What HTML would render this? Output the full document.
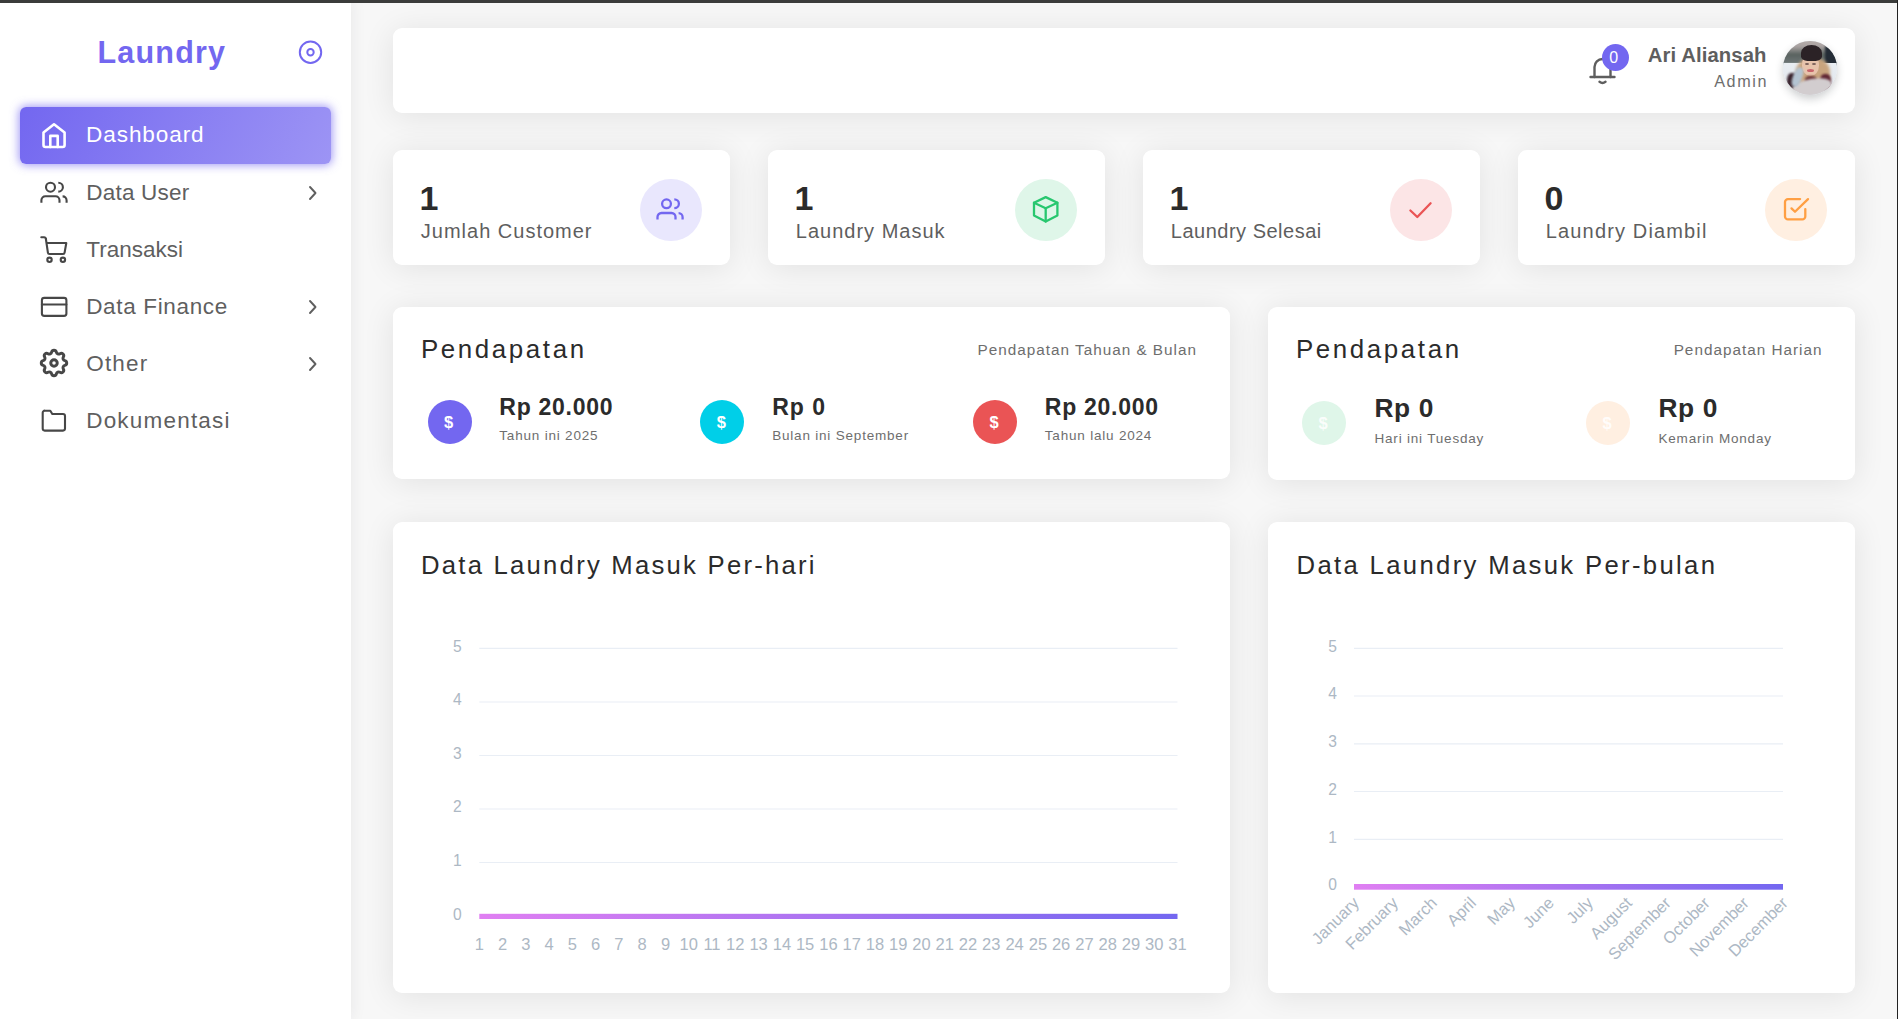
<!DOCTYPE html><html><head><meta charset="utf-8"><style>
*{margin:0;padding:0;box-sizing:border-box}
html,body{width:1898px;height:1019px;overflow:hidden;background:#f7f7f7;font-family:"Liberation Sans",sans-serif}
.abs{position:absolute}
.t{position:absolute;line-height:1;white-space:nowrap}
.card{position:absolute;background:#fff;border-radius:9px;box-shadow:0 3px 32px 0 rgba(0,0,0,.09)}
svg{position:absolute;overflow:visible}
</style></head><body>
<div class="abs" style="left:0;top:0;width:1898px;height:3px;background:#3b3c3b;z-index:50"></div>
<div class="abs" style="left:1897px;top:0;width:1px;height:1019px;background:#222;z-index:50"></div>
<div class="abs" style="left:0;top:0;width:351px;height:1019px;background:#fff;box-shadow:0 0 15px 0 rgba(34,41,47,.08);z-index:5"></div>
<div class="abs" style="left:0;top:0;width:351px;height:1019px;z-index:6">
<div class="t" style="left:97.50px;top:37.00px;font-size:30.5px;letter-spacing:1.2px;color:#7367f0;font-weight:700;">Laundry</div>
<svg style="left:0;top:0" width="351" height="100"><circle cx="310.5" cy="52.2" r="10.7" fill="none" stroke="#7367f0" stroke-width="2.0"/><circle cx="310.5" cy="52.2" r="3.2" fill="none" stroke="#7367f0" stroke-width="2"/></svg>
<div class="abs" style="left:20px;top:107px;width:311px;height:56.6px;border-radius:6px;background:linear-gradient(118deg,#7367f0,rgba(115,103,240,.7));box-shadow:0 0 10px 1px rgba(115,103,240,.7)"></div>
<svg style="left:36px;top:118px" width="36" height="36" fill="none" stroke="#fff" stroke-width="2.6" stroke-linejoin="round" stroke-linecap="round"><path d="M7.5 14.5 L18 6.3 L28.6 14.5 V27 a2 2 0 0 1 -2 2 H9.5 a2 2 0 0 1 -2 -2 Z"/><path d="M14.3 29 V17.9 H21.7 V29"/></svg>
<div class="t" style="left:86.10px;top:123.88px;font-size:22.6px;letter-spacing:0.88px;color:#fff;">Dashboard</div>
<div class="t" style="left:86.20px;top:181.56px;font-size:22.5px;letter-spacing:0.23px;color:#5f5f5f;">Data User</div>
<div class="t" style="left:86.20px;top:238.57px;font-size:22.5px;letter-spacing:0.03px;color:#5f5f5f;">Transaksi</div>
<div class="t" style="left:86.20px;top:295.56px;font-size:22.5px;letter-spacing:0.66px;color:#5f5f5f;">Data Finance</div>
<div class="t" style="left:86.20px;top:352.56px;font-size:22.5px;letter-spacing:1.2px;color:#5f5f5f;">Other</div>
<div class="t" style="left:86.20px;top:409.56px;font-size:22.5px;letter-spacing:1.2px;color:#5f5f5f;">Dokumentasi</div>
<svg style="left:36px;top:176px" width="36" height="36" fill="none" stroke="#474747" stroke-width="2.1" stroke-linecap="butt" stroke-linejoin="round"><circle cx="14.5" cy="11.2" r="4.5"/><path d="M22.3 6.8 A4.6 4.4 0 0 1 22.3 15.6"/><path d="M5.4 26.7 V24.2 A4 4 0 0 1 9.4 20.2 H19.5 A4 4 0 0 1 23.5 24.2 V26.7"/><path d="M26.6 20.4 A4 4 0 0 1 30.6 24.4 V26.7"/></svg>
<svg style="left:36px;top:232px" width="36" height="36" fill="none" stroke="#474747" stroke-width="2.1" stroke-linecap="round" stroke-linejoin="round"><path d="M5.3 5.3 H8 A1.9 1.9 0 0 1 9.9 7 L11.9 20.6 A1.6 1.6 0 0 0 13.5 22 H27 A1.6 1.6 0 0 0 28.6 20.6 L30.3 11 H10.7"/><circle cx="13.5" cy="27.8" r="2.2"/><circle cx="26.9" cy="27.8" r="2.2"/></svg>
<svg style="left:36px;top:290px" width="36" height="36" fill="none" stroke="#474747" stroke-width="2.1" stroke-linecap="round" stroke-linejoin="round"><rect x="5.9" y="7.9" width="24.5" height="18" rx="2.4"/><path d="M5.9 14.5 H30.4"/></svg>
<svg style="left:39.3px;top:348.3px" width="30" height="30" viewBox="0 0 24 24" fill="none" stroke="#474747" stroke-width="2.1" stroke-linecap="round" stroke-linejoin="round"><g transform="translate(12 12) scale(1.13) translate(-12 -12)"><path d="M10.325 4.317c.426 -1.756 2.924 -1.756 3.35 0a1.724 1.724 0 0 0 2.573 1.066c1.543 -.94 3.31 .826 2.37 2.37a1.724 1.724 0 0 0 1.065 2.572c1.756 .426 1.756 2.924 0 3.35a1.724 1.724 0 0 0 -1.066 2.573c.94 1.543 -.826 3.31 -2.37 2.370a1.724 1.724 0 0 0 -2.572 1.065c-.426 1.756 -2.924 1.756 -3.35 0a1.724 1.724 0 0 0 -2.573 -1.066c-1.543 .94 -3.31 -.826 -2.37 -2.37a1.724 1.724 0 0 0 -1.065 -2.572c-1.756 -.426 -1.756 -2.924 0 -3.35a1.724 1.724 0 0 0 1.066 -2.573c-.94 -1.543 .826 -3.31 2.37 -2.37c1 .608 2.296 .07 2.572 -1.065z"/><circle cx="12" cy="12" r="2.3"/></g></svg>
<svg style="left:36px;top:403px" width="36" height="36" fill="none" stroke="#474747" stroke-width="2.1" stroke-linecap="round" stroke-linejoin="round"><path d="M9 7.7 H14.3 L16.3 11 H27 A2 2 0 0 1 29 13 V25.6 A2 2 0 0 1 27 27.6 H8.7 A2 2 0 0 1 6.7 25.6 V9.7 A2 2 0 0 1 9 7.7 Z"/></svg>
<svg style="left:300px;top:180.8px" width="24" height="24" fill="none" stroke="#5f5f5f" stroke-width="1.9" stroke-linecap="round" stroke-linejoin="round"><path d="M10 6 L15.5 12 L10 18"/></svg>
<svg style="left:300px;top:294.8px" width="24" height="24" fill="none" stroke="#5f5f5f" stroke-width="1.9" stroke-linecap="round" stroke-linejoin="round"><path d="M10 6 L15.5 12 L10 18"/></svg>
<svg style="left:300px;top:351.8px" width="24" height="24" fill="none" stroke="#5f5f5f" stroke-width="1.9" stroke-linecap="round" stroke-linejoin="round"><path d="M10 6 L15.5 12 L10 18"/></svg>
</div>
<div class="card" style="left:393px;top:28px;width:1462px;height:85px"></div>
<svg style="left:1580px;top:40px" width="50" height="50" fill="none" stroke="#5e5e5e" stroke-width="2.4" stroke-linecap="round" stroke-linejoin="round"><path d="M14.5 37 V27 A8 8 0 0 1 30.5 27 V37"/><path d="M10.5 37 H34.5"/><path d="M19.5 41.8 Q22.5 44 25.5 41.8"/></svg>
<div class="abs" style="left:1601.5px;top:43.5px;width:27px;height:27px;border-radius:50%;background:#7367f0"></div>
<div class="t" style="left:1609.30px;top:49.96px;font-size:16px;letter-spacing:0px;color:#fff;">0</div>
<div class="t" style="right:131.40px;top:45.03px;font-size:20.3px;letter-spacing:0.1px;color:#5e5e5e;font-weight:700;">Ari Aliansah</div>
<div class="t" style="right:129.90px;top:73.09px;font-size:16.2px;letter-spacing:1.6px;color:#6e6e6e;">Admin</div>
<div class="abs" style="left:1783px;top:41px;width:54px;height:54px;border-radius:50%;box-shadow:0 4px 8px 0 rgba(34,41,47,.22)"></div>
<div class="abs" style="left:1783px;top:41px;width:54px;height:54px;border-radius:50%;overflow:hidden;background:#e4e9ef">
<div class="abs" style="left:-4px;top:-4px;width:62px;height:27px;background:linear-gradient(180deg,#bdb3b0 0%,#a9a2a1 35%,#59625f 65%,#6f7778 100%);filter:blur(1px)"></div>
<div class="abs" style="left:42px;top:5px;width:16px;height:19px;background:#242c36;filter:blur(0.8px)"></div>
<div class="abs" style="left:-4px;top:22px;width:62px;height:36px;background:linear-gradient(180deg,#e9edf2,#dde3ea)"></div>
<div class="abs" style="left:13px;top:17px;width:34px;height:30px;border-radius:45% 45% 35% 35%;background:#c9a47e;filter:blur(1.4px)"></div>
<div class="abs" style="left:19px;top:14px;width:17px;height:21px;border-radius:45% 45% 50% 50%;background:#e8c3ab;filter:blur(0.6px)"></div>
<div class="abs" style="left:22px;top:21.5px;width:4px;height:2px;border-radius:50%;background:#7a6058;filter:blur(0.4px)"></div>
<div class="abs" style="left:29px;top:21.5px;width:4px;height:2px;border-radius:50%;background:#7a6058;filter:blur(0.4px)"></div>
<div class="abs" style="left:24px;top:27.5px;width:7px;height:3px;border-radius:50%;background:#c8646a;filter:blur(0.5px)"></div>
<div class="abs" style="left:17.5px;top:3.5px;width:21.5px;height:16.5px;border-radius:50% 50% 30% 30%;background:#2b2226;filter:blur(0.6px)"></div>
<div class="abs" style="left:4px;top:32px;width:11px;height:17px;border-radius:40%;background:#38222c;filter:blur(1px)"></div>
<div class="abs" style="left:37px;top:33px;width:11px;height:16px;border-radius:40%;background:#5e2432;filter:blur(1px)"></div>
<div class="abs" style="left:22px;top:35px;width:12px;height:10px;border-radius:40%;background:#6a3036;filter:blur(1.2px)"></div>
<div class="abs" style="left:9px;top:38px;width:40px;height:17px;border-radius:45%;background:#d2cdcf;transform:rotate(-10deg);filter:blur(1px)"></div>
<div class="abs" style="left:10px;top:26px;width:9px;height:20px;border-radius:40%;background:#b4c4d2;transform:rotate(20deg);filter:blur(1.2px)"></div>
</div>
<div class="card" style="left:393px;top:150px;width:337px;height:115px"></div>
<div class="t" style="left:419.50px;top:181.14px;font-size:34px;letter-spacing:0px;color:#2b2b2b;font-weight:700;">1</div>
<div class="t" style="left:420.80px;top:221.18px;font-size:20px;letter-spacing:1.0px;color:#5e5e5e;">Jumlah Customer</div>
<div class="abs" style="left:639.7px;top:178.9px;width:62px;height:62px;border-radius:50%;background:#e9e7fd"></div>
<svg style="left:654.7px;top:195.9px" width="32" height="28" fill="none" stroke="#7367f0" stroke-width="2.3" stroke-linecap="butt" stroke-linejoin="round"><circle cx="11.5" cy="7.8" r="4.4"/><path d="M19.3 3.4 A4.6 4.4 0 0 1 19.3 12.2"/><path d="M2.5 23.5 V21 A4 4 0 0 1 6.5 17 H16.5 A4 4 0 0 1 20.5 21 V23.5"/><path d="M23.6 17.2 A4 4 0 0 1 27.6 21.2 V23.5"/></svg>
<div class="card" style="left:768px;top:150px;width:337px;height:115px"></div>
<div class="t" style="left:794.50px;top:181.14px;font-size:34px;letter-spacing:0px;color:#2b2b2b;font-weight:700;">1</div>
<div class="t" style="left:795.80px;top:221.18px;font-size:20px;letter-spacing:1.0px;color:#5e5e5e;">Laundry Masuk</div>
<div class="abs" style="left:1014.7px;top:178.9px;width:62px;height:62px;border-radius:50%;background:#dff6e9"></div>
<svg style="left:1029.7px;top:193.9px" width="32" height="32" fill="none" stroke="#28c76f" stroke-width="2.3" stroke-linecap="round" stroke-linejoin="round"><path d="M15.7 3.1 L27.4 8.8 V21.6 L15.7 27.6 L4 21.6 V8.8 Z"/><path d="M4 8.8 L15.7 14.2 L27.4 8.8"/><path d="M15.7 14.2 V27.6"/></svg>
<div class="card" style="left:1143px;top:150px;width:337px;height:115px"></div>
<div class="t" style="left:1169.50px;top:181.14px;font-size:34px;letter-spacing:0px;color:#2b2b2b;font-weight:700;">1</div>
<div class="t" style="left:1170.80px;top:221.18px;font-size:20px;letter-spacing:0.5px;color:#5e5e5e;">Laundry Selesai</div>
<div class="abs" style="left:1389.7px;top:178.9px;width:62px;height:62px;border-radius:50%;background:#fce5e6"></div>
<svg style="left:1404.7px;top:193.9px" width="32" height="32" fill="none" stroke="#ea5455" stroke-width="2.3" stroke-linecap="round" stroke-linejoin="round"><path d="M5.4 16.5 L12.3 23 L25.6 9.3"/></svg>
<div class="card" style="left:1518px;top:150px;width:337px;height:115px"></div>
<div class="t" style="left:1544.50px;top:181.14px;font-size:34px;letter-spacing:0px;color:#2b2b2b;font-weight:700;">0</div>
<div class="t" style="left:1545.80px;top:221.18px;font-size:20px;letter-spacing:1.15px;color:#5e5e5e;">Laundry Diambil</div>
<div class="abs" style="left:1764.7px;top:178.9px;width:62px;height:62px;border-radius:50%;background:#ffefe1"></div>
<svg style="left:1779.7px;top:193.9px" width="32" height="32" fill="none" stroke="#ff9f43" stroke-width="2.3" stroke-linecap="round" stroke-linejoin="round"><path d="M20.1 5.1 H8 A3 3 0 0 0 5 8.1 V22.4 A3 3 0 0 0 8 25.4 H22.3 A3 3 0 0 0 25.3 22.4 V15.1"/><path d="M11.5 14.4 L15 17.8 L28 5.1"/></svg>
<div class="card" style="left:393px;top:307px;width:837px;height:172px"></div>
<div class="card" style="left:1268px;top:307px;width:587px;height:173px"></div>
<div class="t" style="left:421.00px;top:336.99px;font-size:25.9px;letter-spacing:2.6px;color:#2b2b2b;">Pendapatan</div>
<div class="t" style="right:701.00px;top:342.06px;font-size:15.3px;letter-spacing:1.0px;color:#6e6e6e;">Pendapatan Tahuan &amp; Bulan</div>
<div class="t" style="left:1296.00px;top:336.99px;font-size:25.9px;letter-spacing:2.6px;color:#2b2b2b;">Pendapatan</div>
<div class="t" style="right:75.50px;top:342.06px;font-size:15.3px;letter-spacing:1.0px;color:#6e6e6e;">Pendapatan Harian</div>
<div class="abs" style="left:427.5px;top:400px;width:44px;height:44px;border-radius:50%;background:#7367f0"></div>
<div class="t" style="left:443.90px;top:414.34px;font-size:16.5px;letter-spacing:0px;color:#fff;font-weight:700;">$</div>
<div class="t" style="left:499.30px;top:395.74px;font-size:23px;letter-spacing:0.72px;color:#2b2b2b;font-weight:700;">Rp 20.000</div>
<div class="t" style="left:499.30px;top:428.88px;font-size:13.5px;letter-spacing:0.8px;color:#6e6e6e;">Tahun ini 2025</div>
<div class="abs" style="left:700.4px;top:400px;width:44px;height:44px;border-radius:50%;background:#00cfe8"></div>
<div class="t" style="left:716.80px;top:414.34px;font-size:16.5px;letter-spacing:0px;color:#fff;font-weight:700;">$</div>
<div class="t" style="left:772.20px;top:395.74px;font-size:23px;letter-spacing:1.0px;color:#2b2b2b;font-weight:700;">Rp 0</div>
<div class="t" style="left:772.20px;top:428.88px;font-size:13.5px;letter-spacing:0.8px;color:#6e6e6e;">Bulan ini September</div>
<div class="abs" style="left:973px;top:400px;width:44px;height:44px;border-radius:50%;background:#ea5455"></div>
<div class="t" style="left:989.40px;top:414.34px;font-size:16.5px;letter-spacing:0px;color:#fff;font-weight:700;">$</div>
<div class="t" style="left:1044.80px;top:395.74px;font-size:23px;letter-spacing:0.72px;color:#2b2b2b;font-weight:700;">Rp 20.000</div>
<div class="t" style="left:1044.80px;top:428.88px;font-size:13.5px;letter-spacing:0.8px;color:#6e6e6e;">Tahun lalu 2024</div>
<div class="abs" style="left:1302px;top:400.5px;width:44px;height:44px;border-radius:50%;background:#dff6e9"></div>
<div class="t" style="left:1318.40px;top:415.04px;font-size:16.5px;letter-spacing:0px;color:rgba(255,255,255,.85);font-weight:700;">$</div>
<div class="t" style="left:1374.50px;top:395.35px;font-size:26.3px;letter-spacing:0.6px;color:#2b2b2b;font-weight:700;">Rp 0</div>
<div class="t" style="left:1374.50px;top:431.88px;font-size:13.5px;letter-spacing:0.8px;color:#6e6e6e;">Hari ini Tuesday</div>
<div class="abs" style="left:1586px;top:400.5px;width:44px;height:44px;border-radius:50%;background:#ffefe1"></div>
<div class="t" style="left:1602.40px;top:415.04px;font-size:16.5px;letter-spacing:0px;color:rgba(255,255,255,.85);font-weight:700;">$</div>
<div class="t" style="left:1658.50px;top:395.35px;font-size:26.3px;letter-spacing:0.6px;color:#2b2b2b;font-weight:700;">Rp 0</div>
<div class="t" style="left:1658.50px;top:431.88px;font-size:13.5px;letter-spacing:0.8px;color:#6e6e6e;">Kemarin Monday</div>
<div class="card" style="left:393px;top:522px;width:837px;height:471px"></div>
<div class="card" style="left:1268px;top:522px;width:587px;height:471px"></div>
<div class="t" style="left:421.00px;top:552.76px;font-size:25.7px;letter-spacing:2.23px;color:#2b2b2b;">Data Laundry Masuk Per-hari</div>
<div class="t" style="left:1296.50px;top:552.76px;font-size:25.7px;letter-spacing:2.33px;color:#2b2b2b;">Data Laundry Masuk Per-bulan</div>
<svg style="left:0;top:0" width="1898" height="1019"><defs><linearGradient id="g1" x1="0" x2="1" y1="0" y2="0"><stop offset="0" stop-color="#e07ff2"/><stop offset="1" stop-color="#7367f0"/></linearGradient></defs><g font-family="Liberation Sans" font-size="16.5" fill="#adb8c4"><line x1="479.3" x2="1177.5" y1="648.4" y2="648.4" stroke="#e9eef5" stroke-width="1.2"/><line x1="479.3" x2="1177.5" y1="702" y2="702" stroke="#e9eef5" stroke-width="1.2"/><line x1="479.3" x2="1177.5" y1="755.5" y2="755.5" stroke="#e9eef5" stroke-width="1.2"/><line x1="479.3" x2="1177.5" y1="809" y2="809" stroke="#e9eef5" stroke-width="1.2"/><line x1="479.3" x2="1177.5" y1="862.5" y2="862.5" stroke="#e9eef5" stroke-width="1.2"/><text x="461.8" y="651.6" text-anchor="end" font-size="15.6">5</text><text x="461.8" y="705.2" text-anchor="end" font-size="15.6">4</text><text x="461.8" y="758.7" text-anchor="end" font-size="15.6">3</text><text x="461.8" y="812.2" text-anchor="end" font-size="15.6">2</text><text x="461.8" y="865.7" text-anchor="end" font-size="15.6">1</text><text x="461.8" y="919.5" text-anchor="end" font-size="15.6">0</text><rect x="479.3" y="913.8" width="698.2" height="5.2" fill="url(#g1)"/><text x="479.3" y="950" text-anchor="middle">1</text><text x="502.6" y="950" text-anchor="middle">2</text><text x="525.8" y="950" text-anchor="middle">3</text><text x="549.1" y="950" text-anchor="middle">4</text><text x="572.4" y="950" text-anchor="middle">5</text><text x="595.7" y="950" text-anchor="middle">6</text><text x="618.9" y="950" text-anchor="middle">7</text><text x="642.2" y="950" text-anchor="middle">8</text><text x="665.5" y="950" text-anchor="middle">9</text><text x="688.8" y="950" text-anchor="middle">10</text><text x="712.0" y="950" text-anchor="middle">11</text><text x="735.3" y="950" text-anchor="middle">12</text><text x="758.6" y="950" text-anchor="middle">13</text><text x="781.9" y="950" text-anchor="middle">14</text><text x="805.1" y="950" text-anchor="middle">15</text><text x="828.4" y="950" text-anchor="middle">16</text><text x="851.7" y="950" text-anchor="middle">17</text><text x="874.9" y="950" text-anchor="middle">18</text><text x="898.2" y="950" text-anchor="middle">19</text><text x="921.5" y="950" text-anchor="middle">20</text><text x="944.8" y="950" text-anchor="middle">21</text><text x="968.0" y="950" text-anchor="middle">22</text><text x="991.3" y="950" text-anchor="middle">23</text><text x="1014.6" y="950" text-anchor="middle">24</text><text x="1037.9" y="950" text-anchor="middle">25</text><text x="1061.1" y="950" text-anchor="middle">26</text><text x="1084.4" y="950" text-anchor="middle">27</text><text x="1107.7" y="950" text-anchor="middle">28</text><text x="1131.0" y="950" text-anchor="middle">29</text><text x="1154.2" y="950" text-anchor="middle">30</text><text x="1177.5" y="950" text-anchor="middle">31</text><line x1="1354" x2="1783" y1="648.3" y2="648.3" stroke="#e9eef5" stroke-width="1.2"/><line x1="1354" x2="1783" y1="696" y2="696" stroke="#e9eef5" stroke-width="1.2"/><line x1="1354" x2="1783" y1="743.8" y2="743.8" stroke="#e9eef5" stroke-width="1.2"/><line x1="1354" x2="1783" y1="791.5" y2="791.5" stroke="#e9eef5" stroke-width="1.2"/><line x1="1354" x2="1783" y1="839.3" y2="839.3" stroke="#e9eef5" stroke-width="1.2"/><text x="1336.9" y="651.5" text-anchor="end" font-size="15.6">5</text><text x="1336.9" y="699.2" text-anchor="end" font-size="15.6">4</text><text x="1336.9" y="747.0" text-anchor="end" font-size="15.6">3</text><text x="1336.9" y="794.7" text-anchor="end" font-size="15.6">2</text><text x="1336.9" y="842.5" text-anchor="end" font-size="15.6">1</text><text x="1336.9" y="890.2" text-anchor="end" font-size="15.6">0</text><rect x="1354" y="884" width="429" height="5.7" fill="url(#g1)"/><text x="1360.0" y="904" text-anchor="end" transform="rotate(-45 1360.0 904)">January</text><text x="1399.0" y="904" text-anchor="end" transform="rotate(-45 1399.0 904)">February</text><text x="1438.0" y="904" text-anchor="end" transform="rotate(-45 1438.0 904)">March</text><text x="1477.0" y="904" text-anchor="end" transform="rotate(-45 1477.0 904)">April</text><text x="1516.0" y="904" text-anchor="end" transform="rotate(-45 1516.0 904)">May</text><text x="1555.0" y="904" text-anchor="end" transform="rotate(-45 1555.0 904)">June</text><text x="1594.0" y="904" text-anchor="end" transform="rotate(-45 1594.0 904)">July</text><text x="1633.0" y="904" text-anchor="end" transform="rotate(-45 1633.0 904)">August</text><text x="1672.0" y="904" text-anchor="end" transform="rotate(-45 1672.0 904)">September</text><text x="1711.0" y="904" text-anchor="end" transform="rotate(-45 1711.0 904)">October</text><text x="1750.0" y="904" text-anchor="end" transform="rotate(-45 1750.0 904)">November</text><text x="1789.0" y="904" text-anchor="end" transform="rotate(-45 1789.0 904)">December</text></g></svg>
</body></html>
